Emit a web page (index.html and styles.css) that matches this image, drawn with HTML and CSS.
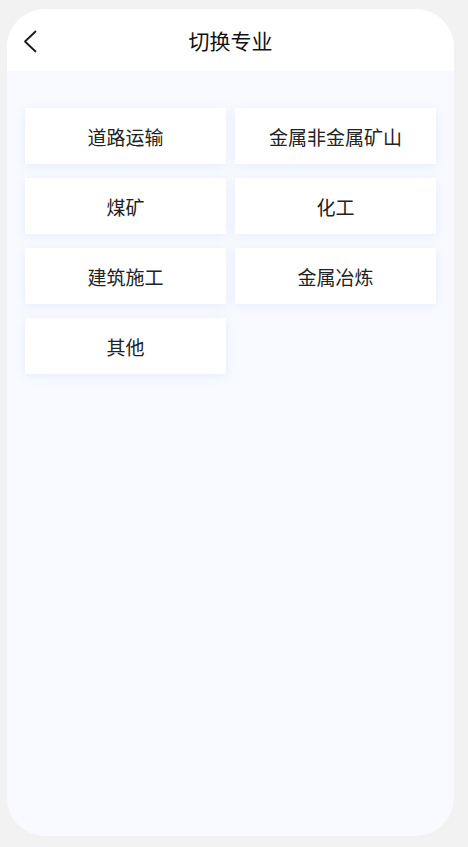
FILE: index.html
```html
<!DOCTYPE html>
<html lang="zh-CN">
<head>
  <meta charset="UTF-8" />
  <title>切换专业</title>
  <meta name="viewport" content="width=device-width, initial-scale=1.0"/>
  <link rel="stylesheet" href="styles.css">
</head>
<body>

  <div class="phone">
    <header class="topbar">
      <a class="back" href="#">
        <svg width="14" height="23" viewBox="0 0 14 23">
          <path d="M12.5 1.5 L2 11.5 L12.5 21.5" fill="none" stroke="#1a1a1a" stroke-width="1.8" stroke-linecap="round" stroke-linejoin="round"/>
        </svg>
      </a>
      <h1>切换专业</h1>
    </header>

    <div class="content">
      <div class="grid">
        <div class="item">道路运输</div>
        <div class="item">金属非金属矿山</div>
        <div class="item">煤矿</div>
        <div class="item">化工</div>
        <div class="item">建筑施工</div>
        <div class="item">金属冶炼</div>
        <div class="item">其他</div>
      </div>
    </div>
  </div>

</body>
</html>
```

FILE: styles.css
```css
body {
  margin: 0;
  background: #f2f2f2;
  font-family: "Noto Sans CJK SC", "Noto Sans", sans-serif;
  color: #1f1f1f;
}

.phone {
  margin: 9px 14px 11px 7px;
  height: 827px;
  background: #f8faff;
  border-radius: 38px;
  overflow: hidden;
  display: flex;
  flex-direction: column;
}

.topbar {
  height: 62px;
  background: #ffffff;
  display: flex;
  align-items: center;
  justify-content: center;
  position: relative;
}

.topbar h1 {
  margin: 0;
  font-size: 21px;
  font-weight: 400;
  color: #111;
}

.back {
  position: absolute;
  left: 16px;
  top: 21px;
  display: block;
  line-height: 0;
}

.content {
  flex: 1;
  padding: 37px 18px 0 18px;
}

.grid {
  display: grid;
  grid-template-columns: 201px 201px;
  column-gap: 9px;
  row-gap: 14px;
}

.item {
  height: 56px;
  background: #ffffff;
  box-shadow: 0 2px 10px rgba(200, 215, 240, 0.35);
  display: flex;
  align-items: center;
  justify-content: center;
  font-size: 19px;
  color: #222;
}
```
